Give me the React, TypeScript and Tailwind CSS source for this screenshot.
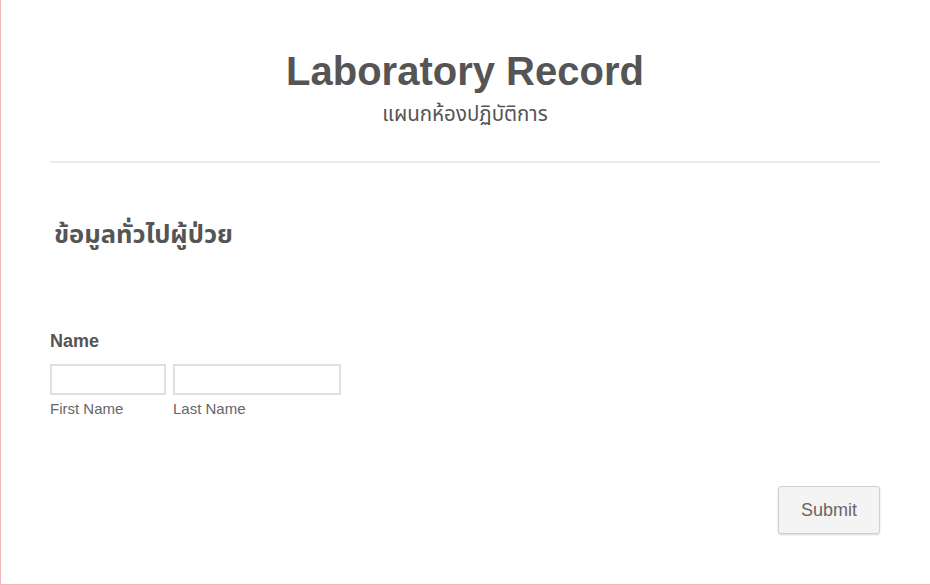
import React from "react";

export default function App() {
  const font = { fontFamily: '"Liberation Sans", Arial, "Noto Sans", "Noto Sans Thai", Tahoma, sans-serif' };
  return (
    <div
      className="w-[930px] h-[585px] bg-white border-l border-b border-[#f4b6b6] overflow-hidden text-[#555]"
      style={font}
    >
      <div className="pl-[49px] pr-[50px] pt-[47px]">
        <div className="flex flex-col items-center">
          <h1 className="text-[40px] leading-[48px] font-bold text-[#555]">Laboratory Record</h1>
          <div className="text-[20.5px] leading-[26px] mt-[6px] text-[#555]">แผนกห้องปฏิบัติการ</div>
        </div>
        <div className="mt-[34px] h-[2px] bg-[#ececec]" />
        <h2 className="mt-[55px] ml-[4px] text-[25.5px] leading-[32px] font-bold text-[#555]">ข้อมูลทั่วไปผู้ป่วย</h2>
        <div className="mt-[80px]">
          <div className="text-[18px] leading-[22px] font-bold text-[#555]">Name</div>
          <div className="mt-[12px] flex gap-[7px]">
            <div className="flex flex-col">
              <input className="w-[116px] h-[31px] border-2 border-[#e0e0e0] outline-none" />
              <span className="text-[15px] leading-[20px] mt-[4px] text-[#666]">First Name</span>
            </div>
            <div className="flex flex-col">
              <input className="w-[168px] h-[31px] border-2 border-[#e0e0e0] outline-none" />
              <span className="text-[15px] leading-[20px] mt-[4px] text-[#666]">Last Name</span>
            </div>
          </div>
        </div>
        <div className="mt-[67px] flex justify-end">
          <button className="w-[102px] h-[48px] bg-[#f4f4f4] border border-[#d0d0d0] rounded-[3px] shadow-[0_1px_2px_rgba(0,0,0,0.15)] text-[18px] text-[#666]">
            Submit
          </button>
        </div>
      </div>
    </div>
  );
}
